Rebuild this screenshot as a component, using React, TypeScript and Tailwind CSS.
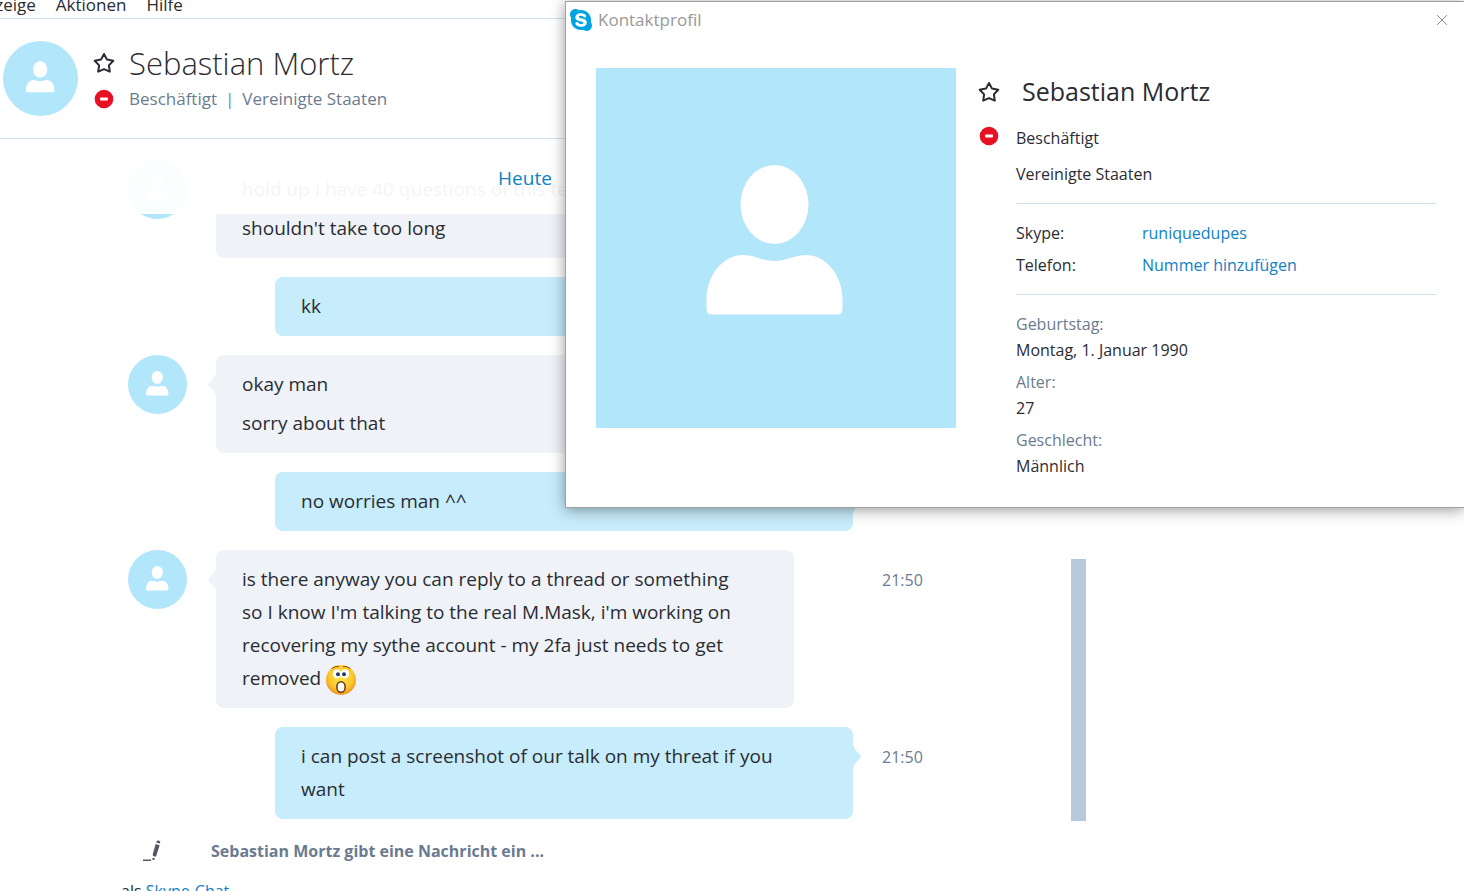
import React from "react";
import { FaSkype } from "react-icons/fa";

type Message = {
  own?: boolean;
  time?: string;
  lines: React.ReactNode[];
};

const Person: React.FC = () => (
  <svg viewBox="0 0 360 360" className="block w-full h-full" fill="#fff" aria-hidden="true">
    <ellipse cx="178.5" cy="136.5" rx="34" ry="39.5" />
    <path d="M110.5 241V232C110.5 207 127 187 147 187C160 187 165 193 178.5 193C192 193 197 187 210 187C230 187 246.5 207 246.5 232V241Q246.5 246.5 241 246.5H116Q110.5 246.5 110.5 241Z" />
  </svg>
);

const StarIcon: React.FC = () => (
  <svg
    viewBox="0 0 22 22"
    className="block w-[22px] h-[22px]"
    fill="none"
    stroke="#2b2c33"
    strokeWidth="2"
    strokeLinejoin="round"
    aria-hidden="true"
  >
    <path d="M11 2L14 7.6L20.3 8.8L15.9 13.4L16.8 19.7L11 17.1L5.2 19.7L6.1 13.4L1.7 8.8L8 7.6Z" />
  </svg>
);

const BusyIcon: React.FC = () => (
  <svg viewBox="0 0 22 22" className="block w-[22px] h-[22px]" aria-hidden="true">
    <circle cx="11" cy="11" r="9.3" fill="#e81123" />
    <rect x="7" y="9.6" width="8" height="2.8" rx="0.8" fill="#fff" />
  </svg>
);

const Surprised: React.FC = () => (
  <svg viewBox="0 0 30 30" className="inline-block w-[30px] h-[30px] align-middle" role="img" aria-label="surprised">
    <defs>
      <radialGradient id="face" cx="0.5" cy="0.4" r="0.62">
        <stop offset="0" stopColor="#ffe94a" />
        <stop offset="0.65" stopColor="#fdc62c" />
        <stop offset="1" stopColor="#ee8a22" />
      </radialGradient>
    </defs>
    <circle cx="15" cy="15" r="15" fill="url(#face)" />
    <path d="M5.5 3.6Q9 0.8 13 1.6M17 1.6Q21 0.8 24.5 3.6" fill="none" stroke="#8a4b12" strokeWidth="1" />
    <ellipse cx="11" cy="8.8" rx="4.2" ry="4.5" fill="#fff" />
    <ellipse cx="19" cy="8.8" rx="4.2" ry="4.5" fill="#fff" />
    <circle cx="12" cy="9.2" r="2" fill="#2c3a63" />
    <circle cx="18" cy="9.2" r="2" fill="#2c3a63" />
    <ellipse cx="15" cy="22" rx="4.2" ry="5.3" fill="#fff" stroke="#6b3b14" strokeWidth="1.6" />
  </svg>
);

const Pencil: React.FC = () => (
  <svg viewBox="0 0 18 22" className="block w-[18px] h-[22px]" fill="#55565f" aria-hidden="true">
    <path d="M0 19.5H8V21H0Z" />
    <path d="M12.6 4L16.6 5.2L13.4 15.4Q12.8 17 11.2 16.5Q9.4 16 9.8 14.2Z" />
    <path d="M13.1 2.4Q13.8 0 15.8 0.6Q17.8 1.2 17.1 3.5Z" />
    <circle cx="10.5" cy="18.9" r="1.2" />
  </svg>
);

const messages: Message[] = [
  { lines: ["hold up I have 40 questions of this test", "shouldn't take too long"] },
  { own: true, lines: ["kk"] },
  { lines: ["okay man", "sorry about that"] },
  { own: true, time: "21:49", lines: ["no worries man ^^"] },
  {
    time: "21:50",
    lines: [
      <>
        is there anyway you can reply to a thread or something so I know I'm talking to the real M.Mask,
        i'm working on recovering my sythe account - my 2fa just needs to get removed <Surprised />
      </>,
    ],
  },
  { own: true, time: "21:50", lines: ["i can post a screenshot of our talk on my threat if you want"] },
];

const facts = [
  { label: "Geburtstag:", value: "Montag, 1. Januar 1990" },
  { label: "Alter:", value: "27" },
  { label: "Geschlecht:", value: "Männlich" },
];

const MessageRow: React.FC<{ message: Message }> = ({ message }) => (
  <li className="grid grid-cols-[59px_1fr_40px] gap-[29px]">
    <div>
      {!message.own && (
        <div className="w-[59px] h-[59px] rounded-full overflow-hidden bg-[#b1e6fb]">
          <Person />
        </div>
      )}
    </div>
    <div
      className={
        message.own
          ? "relative ml-[59px] rounded-lg bg-[#c7ecfc] pl-[26px] pr-[52px] py-[13px]"
          : "relative mr-[59px] rounded-lg bg-[#eff3f8] pl-[26px] pr-[52px] py-[13px]"
      }
    >
      {/* Bubble tail */}
      {message.own ? (
        <svg viewBox="0 0 8 24" className="absolute left-full top-[18px] w-2 h-6" fill="#c7ecfc" aria-hidden="true">
          <path d="M0 0Q1.5 5 6.8 9.6Q9 12 6.8 13.8Q1.5 18 0 23Z" />
        </svg>
      ) : (
        <svg viewBox="0 0 8 24" className="absolute right-full top-[18px] w-2 h-6" fill="#eff3f8" aria-hidden="true">
          <path d="M8 0Q6.5 5 1.2 9.6Q-1 12 1.2 13.8Q6.5 18 8 23Z" />
        </svg>
      )}
      <div className="flex flex-col gap-1.5 text-[19px] leading-[33px]">
        {message.lines.map((line, i) => (
          <p key={i}>{line}</p>
        ))}
      </div>
    </div>
    <time className="pt-3.5 text-base leading-[33px] text-[#6b7b93]">{message.time}</time>
  </li>
);

const ContactProfile: React.FC = () => (
  <section
    aria-label="Kontaktprofil"
    className="absolute top-px left-[565px] right-0 bg-white border border-r-0 border-[#a0a0a0] shadow-[0_2px_14px_rgba(0,0,0,0.4)]"
  >
    <div className="h-9 pl-1 pr-4 flex items-center gap-1.5">
      <FaSkype className="w-[22px] h-[26px] text-[#00a3e4]" />
      <h2 className="flex-1 text-[17px] text-[#999999]">Kontaktprofil</h2>
      <button aria-label="Schließen" className="w-3 h-3">
        <svg viewBox="0 0 12 12" className="block w-3 h-3" stroke="#909090" aria-hidden="true">
          <path d="M1 1L11 11M11 1L1 11" />
        </svg>
      </button>
    </div>

    <div className="flex items-start gap-[22px] pt-[30px] pb-7 pl-[30px] pr-7">
      <div className="w-[360px] h-[360px] shrink-0 bg-[#b1e6fb]">
        <Person />
      </div>

      <div className="flex-1 pt-1.5">
        <div className="flex items-center gap-[22px] h-9">
          <button aria-label="Favorit">
            <StarIcon />
          </button>
          <h3 className="text-[25px]">Sebastian Mortz</h3>
        </div>

        <div className="mt-2.5 grid grid-cols-[38px_1fr] text-base">
          <div className="pt-[5px]">
            <BusyIcon />
          </div>
          <div>
            <p className="leading-9">Beschäftigt</p>
            <p className="leading-9">Vereinigte Staaten</p>

            <dl className="mt-[11px] py-[13px] border-y border-[#d3e1ec] grid grid-cols-[126px_1fr] leading-8">
              <dt>Skype:</dt>
              <dd>
                <a href="#" className="text-[#0f81c4]">runiquedupes</a>
              </dd>
              <dt>Telefon:</dt>
              <dd>
                <a href="#" className="text-[#0f81c4]">Nummer hinzufügen</a>
              </dd>
            </dl>

            <dl className="pt-4 flex flex-col gap-1.5 leading-[26px]">
              {facts.map((fact) => (
                <div key={fact.label}>
                  <dt className="text-[#6b7b8f]">{fact.label}</dt>
                  <dd>{fact.value}</dd>
                </div>
              ))}
            </dl>
          </div>
        </div>
      </div>
    </div>
  </section>
);

export default function App() {
  return (
    <div className="relative h-screen overflow-hidden bg-white text-[#2b2c33] font-['Open_Sans','Noto_Sans',sans-serif]">
      {/* Menu bar */}
      <nav className="h-[19px] -ml-[26px] flex items-end gap-5 pb-0.5 border-b border-[#d3e1ec] text-[17px] leading-[22px]">
        <button>Anzeige</button>
        <button>Aktionen</button>
        <button>Hilfe</button>
      </nav>

      {/* Contact header */}
      <header className="h-[120px] pl-[3px] flex items-center gap-[15px] border-b border-[#d3e1ec]">
        <div className="w-[75px] h-[75px] rounded-full overflow-hidden bg-[#b1e6fb]">
          <Person />
        </div>
        <div className="grid grid-cols-[36px_1fr] grid-rows-[40px_32px] items-center">
          <button aria-label="Favorit">
            <StarIcon />
          </button>
          <h1 className="text-[31px] leading-10 font-light">Sebastian Mortz</h1>
          <BusyIcon />
          <p className="flex gap-2 text-[17px] text-[#6b7b8f]">
            <span>Beschäftigt</span>
            <span className="text-[#4d94c0]">|</span>
            <span>Vereinigte Staaten</span>
          </p>
        </div>
      </header>

      {/* Conversation */}
      <main className="max-w-[1086px]">
        <div className="relative flex">
          <ul className="flex-1 flex flex-col gap-[19px] pt-[21px] pb-0.5 pl-32 pr-[149px]">
            {messages.map((message, i) => (
              <MessageRow key={i} message={message} />
            ))}
          </ul>
          <div className="w-[15px] flex items-end">
            <div className="w-full h-[262px] bg-[#b7cadb]" />
          </div>
          <div className="absolute inset-x-0 top-0 h-[75px] pt-1 pl-32 pr-[164px] flex items-center justify-center bg-white/95">
            <a href="#" className="text-[19px] text-[#0f81c4]">Heute</a>
          </div>
        </div>

        <div className="mt-[18px] pl-[143px] flex items-center gap-[50px] h-6">
          <Pencil />
          <p className="text-base font-bold text-[#6b7b8f]">Sebastian Mortz gibt eine Nachricht ein ...</p>
        </div>

        <p className="mt-4 pl-[121px] text-base leading-6">
          als <a href="#" className="text-[#0f81c4]">Skype-Chat</a>
        </p>
      </main>

      <ContactProfile />
    </div>
  );
}
